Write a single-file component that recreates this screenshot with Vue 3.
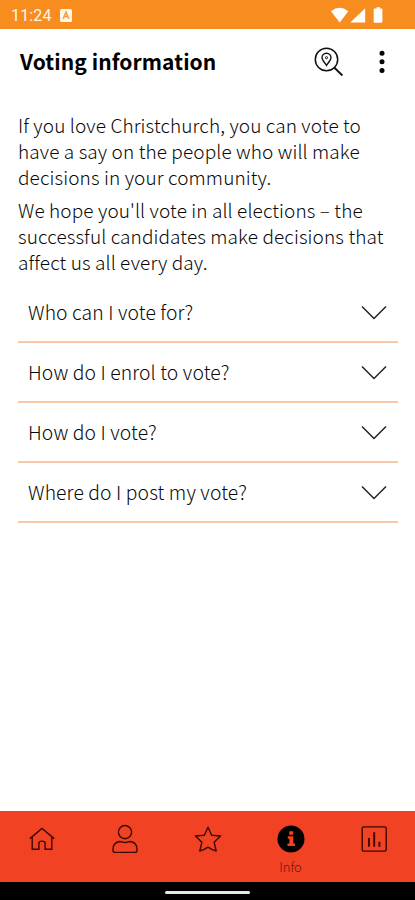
<script setup>
const intro = [
  ['If you love Christchurch, you can vote to', 'have a say on the people who will make', 'decisions in your community.'],
  ["We hope you'll vote in all elections – the", 'successful candidates make decisions that', 'affect us all every day.'],
]
const questions = ['Who can I vote for?', 'How do I enrol to vote?', 'How do I vote?', 'Where do I post my vote?']
</script>

<template>
  <div class="screen">
    <header class="status">
      <span class="time">11:24</span>
      <svg class="badge" width="12" height="13" viewBox="0 0 12 13">
        <rect width="12" height="13" rx="1.5" fill="#fff6e8" />
        <path d="M3.2 9.7 6 3.2l2.8 6.5M4.2 7.6h3.6" fill="none" stroke="#f49a3d" stroke-width="1.5" />
      </svg>
      <svg class="signals" width="52" height="18" viewBox="0 0 52 18" fill="#fff">
        <path d="M0 4.2Q8.5 -2.6 17.3 4.2L8.7 15.5Z" />
        <path d="M34.2 1.2V15.5H19.3Z" />
        <path d="M43.7 1.5h1.9V.3h3.4v1.2h1.4q1 0 1 1v12.2q0 1-1 1h-6.7q-1 0-1-1V2.5q0-1 1-1Z" />
      </svg>
    </header>

    <div class="bar">
      <h1>Voting information</h1>
      <svg class="search" width="30" height="30" viewBox="0 0 30 30" fill="none" stroke="#111">
        <circle cx="12.5" cy="12.5" r="11.2" stroke-width="1.5" />
        <path d="m20.2 20.5 8.2 8" stroke-width="1.8" />
        <path d="M12.5 18.4C10.5 15.2 8 13.2 8 10.8a4.5 4.5 0 0 1 9 0c0 2.4-2.5 4.4-4.5 7.6Z" stroke-width="1.4" />
        <circle cx="12.5" cy="10.7" r="1.1" stroke-width="1" />
      </svg>
      <svg class="more" width="6" height="24" viewBox="0 0 6 24">
        <circle cx="3" cy="3.2" r="2.5" /><circle cx="3" cy="11.8" r="2.5" /><circle cx="3" cy="20.4" r="2.5" />
      </svg>
    </div>

    <main>
      <p v-for="(lines, i) in intro" :key="i">
        <span v-for="line in lines" :key="line" class="line">{{ line }}</span>
      </p>
      <ul>
        <li v-for="q in questions" :key="q">
          <span>{{ q }}</span>
          <svg width="26" height="16" viewBox="0 0 26 16" fill="none" stroke="#222" stroke-width="1.5">
            <path d="m1 1.5 12 12 12-12" />
          </svg>
        </li>
      </ul>
    </main>

    <nav>
      <div class="tab">
        <svg width="30" height="30" viewBox="0 0 30 30">
          <path d="M2.8 14.6 15 4.4l12.2 10.2M5.2 12.7v12.6h6.7v-6.2q0-2 3.1-2t3.1 2v6.2h6.7V12.7" />
        </svg>
      </div>
      <div class="tab">
        <svg width="30" height="30" viewBox="0 0 30 30">
          <circle cx="15" cy="8.1" r="6.6" />
          <path d="M9.3 17.5q2.5.1 3.5.6 2.2.7 4.4 0 1-.5 3.5-.6 6.4 1.2 6.4 8.2 0 2.7-2.1 2.7H5q-2.1 0-2.1-2.7 0-7 6.4-8.2Z" />
        </svg>
      </div>
      <div class="tab">
        <svg width="30" height="30" viewBox="0 0 30 30">
          <path d="m15 3.2 3.7 8 8.8.8-6.4 6.2 2.1 8.8q-3.6-.6-8.2-3.9-4.6 3.3-8.2 3.9l2.1-8.8L2.5 12l8.8-.8Z" stroke-linejoin="round" />
        </svg>
      </div>
      <div class="tab">
        <svg width="30" height="30" viewBox="0 0 30 30">
          <circle class="solid" cx="15" cy="15" r="13.5" />
          <path class="mark" d="M13.2 7.3h4v3.5h-4zM11.8 12.3h5.5v7.3H19V22h-7.5v-2.4h1.9v-4.9h-1.6z" />
        </svg>
        <span>Info</span>
      </div>
      <div class="tab">
        <svg width="30" height="30" viewBox="0 0 30 30">
          <rect x="3.2" y="2.9" width="24" height="24.2" rx="1.5" />
          <path d="M10 14v8.8M15.2 8.2v14.6M20.4 17.7v5.1" stroke-width="1.9" />
        </svg>
      </div>
    </nav>
    <footer><i></i></footer>
  </div>
</template>

<style>
body { background: #fff; }
</style>

<style scoped>
.screen { width: 415px; height: 900px; display: flex; flex-direction: column; overflow: hidden; background: #fff; color: #080808; font-family: "Noto Sans CJK SC", "Noto Sans", sans-serif; }
.status { height: 29px; flex: none; box-sizing: border-box; padding: 3px 32px 0 11px; display: flex; align-items: center; background: #f78c1f; }
.time { font: 400 16px/24px Roboto, sans-serif; letter-spacing: .15px; color: #fff6e8; }
.badge { margin-left: 8px; margin-bottom: 1px; }
.signals { margin: 0 0 0 auto; }
.bar { height: 65px; flex: none; display: flex; align-items: center; padding: 0 30px 0 20px; }
h1 { margin: 0 auto 2px 0; font-size: 21px; line-height: 30px; font-weight: 700; letter-spacing: .08px; color: #000; white-space: nowrap; }
.search { margin-right: 35px; }
main { flex: 1; padding: 18px 17px 0 18px; font-size: 19px; font-weight: 300; }
p { margin: 0 0 7px; line-height: 26px; letter-spacing: .11px; }
.line { display: block; white-space: nowrap; }
ul { list-style: none; margin: 8px 0 0; padding: 0; }
li { height: 60px; box-sizing: border-box; padding: 0 11px 0 10px; display: flex; align-items: center; justify-content: space-between; border-bottom: 2px solid #f9c6a6; }
li span { font-size: 19.3px; line-height: 26px; letter-spacing: .12px; }
li svg { margin-top: 2px; }
nav { height: 71px; flex: none; display: grid; grid-template-columns: repeat(5, 83px); background: #f24224; }
.tab { padding-top: 13px; display: flex; flex-direction: column; align-items: center; }
.tab svg { fill: none; stroke: #3a0903; stroke-width: 1.4; }
.tab .solid { fill: #000; stroke: none; }
.tab .mark { fill: #f24224; stroke: none; }
.tab span { font-size: 13px; line-height: 18px; margin-top: 4px; font-weight: 300; color: #6d1a0c; }
footer { height: 18px; flex: none; background: #000; display: flex; justify-content: center; align-items: center; }
footer i { width: 85px; height: 3px; margin-top: 2px; border-radius: 2px; background: #e9e9e9; }
</style>
